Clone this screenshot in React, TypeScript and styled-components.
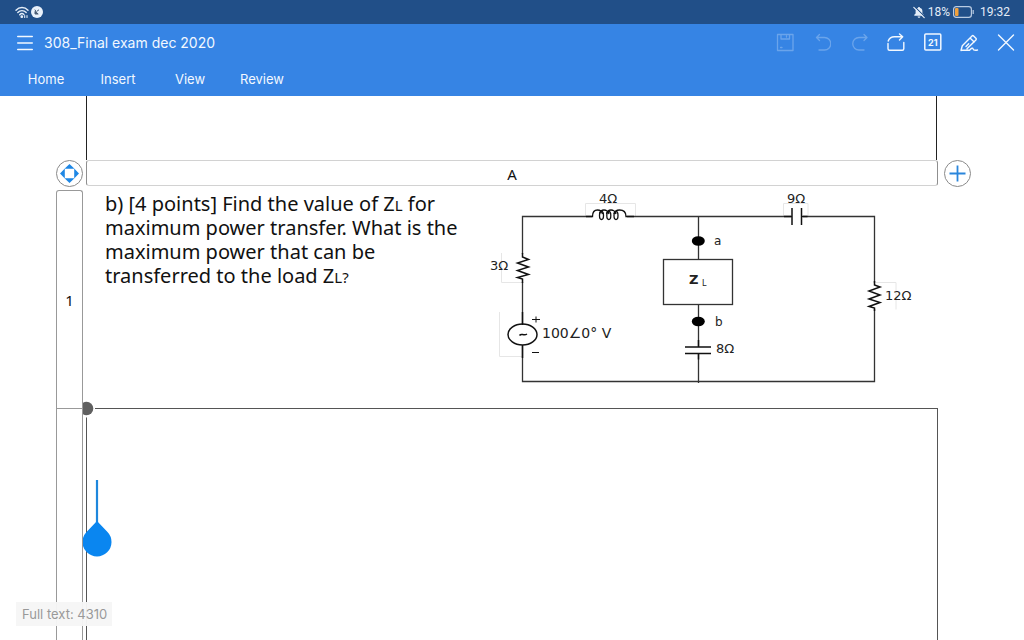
import React from "react";
import styled, { createGlobalStyle } from "styled-components";

const GlobalStyle = createGlobalStyle`
  *, *::before, *::after { box-sizing: border-box; }
  body {
    margin: 0;
    background: #ffffff;
    color: #111111;
    font-family: "Noto Sans", "Open Sans", sans-serif;
  }
  button { font: inherit; color: inherit; background: none; border: 0; padding: 0; cursor: pointer; }
  svg { display: block; }
`;

const Page = styled.div`
  display: flex;
  flex-direction: column;
  height: 100vh;
  overflow: hidden;
  position: relative;
`;

const StatusBar = styled.div`
  flex: none;
  height: 24px;
  padding: 0 14px 0 15px;
  display: flex;
  align-items: center;
  justify-content: space-between;
  background: #214f88;
  color: #e4edf8;
  font-family: Roboto, sans-serif;
  font-size: 12px;
`;

const StatusGroup = styled.div<{ $gap: number }>`
  display: flex;
  align-items: center;
  gap: ${(p) => p.$gap}px;
`;

const Clock = styled.span`
  margin-left: 3px;
`;

const Header = styled.header`
  flex: none;
  background: #3684e4;
  color: #f2f8ff;
  font-family: Inter, sans-serif;
`;

const TitleRow = styled.div`
  height: 38px;
  display: flex;
  align-items: center;
  padding: 0 8px 0 15px;
`;

const Title = styled.h1`
  flex: 1;
  margin: 0 0 0 9px;
  font-size: 14px;
  line-height: 20px;
  font-weight: 400;
`;

const Tools = styled.div`
  display: flex;
  gap: 17px;
`;

const IconButton = styled.button`
  width: 20px;
  height: 20px;
  display: flex;
  align-items: center;
  justify-content: center;
  &:disabled { opacity: 0.28; }
`;

const Tabs = styled.nav`
  height: 34px;
  display: flex;
  align-items: flex-start;
  padding: 7px 10px 0;
`;

const Tab = styled.button`
  width: 72px;
  font-size: 13px;
  line-height: 20px;
  text-align: center;
`;

const Document = styled.main`
  flex: 1;
  min-height: 0;
  display: grid;
  grid-template-columns: 27px minmax(0, 1fr) 27px;
  grid-template-rows: 64px 26px 222px 1fr;
  padding: 0 53px 0 56px;
`;

const PreviousTable = styled.div`
  grid-column: 2;
  margin: 0 7px 0 3px;
  border: solid #222222;
  border-width: 0 1px;
`;

const RoundButton = styled.button`
  grid-row: 2;
  width: 27px;
  height: 27px;
  border: 1px solid #8a8a8a;
  border-radius: 50%;
  display: flex;
  align-items: center;
  justify-content: center;
`;

const ColumnRuler = styled.div`
  grid-row: 2;
  grid-column: 2;
  margin: 0 6px 0 3px;
  border: 1px solid #8f8f8f;
  border-top-color: #d2d2d2;
  border-bottom-color: #d2d2d2;
  border-radius: 3px;
  text-align: center;
  font-size: 15px;
  line-height: 26px;
`;

const RowRuler = styled.div<{ $first?: boolean }>`
  grid-column: 1;
  margin-top: ${(p) => (p.$first ? 4 : 0)}px;
  border: 1px solid #999999;
  border-bottom: 0;
  border-radius: ${(p) => (p.$first ? "3px 3px 0 0" : "0")};
  display: flex;
  align-items: center;
  justify-content: center;
  font-size: 15px;
  line-height: 20px;
`;

const QuestionCell = styled.section`
  grid-column: 2;
  margin: 0 6px 0 3px;
  padding: 4px 12px 0 19px;
  display: flex;
  justify-content: space-between;
  align-items: flex-start;
`;

const Question = styled.p`
  margin: 0;
  padding-top: 2px;
  max-width: 364px;
  font-size: 20px;
  line-height: 24px;
  color: #111111;
`;

const Small = styled.span`
  font-size: 15px;
  line-height: 20px;
`;

const Circuit = styled.svg`
  flex: none;
  width: 440px;
  height: 200px;
  font-family: "DejaVu Sans", sans-serif;
  font-size: 12px;
`;

const AnswerCell = styled.section`
  grid-column: 2;
  margin: 0 6px 0 3px;
  border: 1px solid #555555;
  border-bottom: 0;
  position: relative;
`;

const CornerHandle = styled.svg`
  position: absolute;
  left: -4px;
  top: -10px;
`;

const Caret = styled.svg`
  position: absolute;
  left: -4px;
  top: 71px;
`;

const CountBadge = styled.div`
  position: absolute;
  left: 16px;
  bottom: 14px;
  padding: 0 5px 0 6px;
  background: rgba(246, 246, 246, 0.96);
  color: #999999;
  font-family: Inter, sans-serif;
  font-size: 13px;
  line-height: 24px;
`;

const stroke = {
  fill: "none",
  stroke: "currentColor",
  strokeLinecap: "round" as const,
  strokeLinejoin: "round" as const,
};

const WifiIcon = () => (
  <svg width="14" height="13" viewBox="0 0 14 13" {...stroke} strokeWidth="1.4">
    <path d="M1 4.200C4.300 .6 9.700 .6 13 4.200M2.800 6.500c2.300-2.500 6.100-2.500 8.400 0M4.700 8.700c1.300-1.300 3-1.300 4.200-.2" />
    <circle cx="6.800" cy="10.700" r=".7" fill="currentColor" />
    <path d="M9.700 9.600v1.800M12 9.600v1.800" strokeWidth="1.100" />
  </svg>
);

const BadgeIcon = () => (
  <svg width="12" height="12" viewBox="0 0 12 12">
    <circle cx="6" cy="6" r="6" fill="#e9f1fb" />
    <path d="M3.800 3.600l1 1.500M4 8h3.200L4 5.300zM5.500 5.500L8 3.800" stroke="#4a5c74" fill="#4a5c74" strokeWidth="1" />
  </svg>
);

const MutedBellIcon = () => (
  <svg width="12" height="13" viewBox="0 0 12 13">
    <path d="M1.300 9.700V8.800l1.300-1.200V5C2.600 3.200 3.700 2 5.200 1.700V.9h1.600v.8C8.300 2 9.400 3.200 9.400 5v2.600l1.300 1.200v.9zM4.600 10.500h2.800c0 1.800-2.800 1.800-2.800 0z" fill="currentColor" />
    <path d="M1.800 .8l10 10" stroke="#214f88" strokeWidth="1.200" />
    <path d="M.8 1.300l10.400 10.400" stroke="currentColor" strokeWidth="1.200" strokeLinecap="round" />
  </svg>
);

const BatteryIcon = () => (
  <svg width="21" height="12" viewBox="0 0 21 12">
    <rect x=".6" y=".6" width="17.800" height="10.800" rx="2.600" fill="none" stroke="#b9cbe2" strokeWidth="1.200" />
    <rect x="2" y="2" width="3.500" height="8" rx="1" fill="#f2a13c" />
    <path d="M20.200 4v4" stroke="#b9cbe2" strokeWidth="1.200" />
  </svg>
);

const MenuIcon = () => (
  <svg width="16" height="16" viewBox="0 0 16 16" {...stroke} strokeWidth="1.400">
    <path d="M.7 1.500h14.600M.7 8h14.600M.7 14.500h14.600" />
  </svg>
);

const SaveIcon = () => (
  <svg width="20" height="20" viewBox="0 0 20 20" {...stroke} strokeWidth="1.300">
    <path d="M3.500 1.500h15.500v16H3.500zM7 1.500v4.500h8.500V1.500M12.500 3v1M6.500 14.500h1.500" />
  </svg>
);

const UndoIcon = () => (
  <svg width="20" height="20" viewBox="0 0 20 20" {...stroke} strokeWidth="1.300">
    <path d="M8.500 1.500L5.500 4.500l3 3M5.700 4.500h7.800a5.900 5.900 0 0 1 0 12.500H8" />
  </svg>
);

const RedoIcon = () => (
  <svg width="20" height="20" viewBox="0 0 20 20" {...stroke} strokeWidth="1.300">
    <path d="M16 1.500l3 3-3 3M18.800 4.500H11a5.900 5.900 0 0 0 0 12.500h5" />
  </svg>
);

const ShareIcon = () => (
  <svg width="20" height="20" viewBox="0 0 20 20" {...stroke} strokeWidth="1.400">
    <path d="M3 10.500v5.200c0 .9.600 1.500 1.500 1.500h12.800c.9 0 1.500-.6 1.500-1.500V9.500M3.200 8C4.200 5 6.500 3.700 9.500 3.700h7.800M14.500 1l3.200 2.700L14.500 7" />
  </svg>
);

const PagesIcon = () => (
  <svg width="20" height="20" viewBox="0 0 20 20">
    <rect x="2.800" y="1" width="16" height="16" rx="1" {...stroke} strokeWidth="1.500" />
    <text x="10.800" y="12.500" textAnchor="middle" fontFamily="Inter, sans-serif" fontSize="9" fontWeight="700" fill="currentColor">21</text>
  </svg>
);

const EditIcon = () => (
  <svg width="19" height="18" viewBox="0 0 19 18" {...stroke} strokeWidth="1.400">
    <path d="M1 16.500l1.300-4.800L12 2c.5-.5 1.100-.5 1.600 0l2.300 2.300c.5.500.5 1.100 0 1.600L7 14.800M10 4l4.200 4M1 16.300h8.500c2-2.300 3.200-2.700 3.500-1.500.3 1.300 1.500 1.700 4.500 1.200M6 12.500l2.700-2.700" />
  </svg>
);

const CloseIcon = () => (
  <svg width="18" height="18" viewBox="0 0 18 18" {...stroke} strokeWidth="1.400">
    <path d="M1.500 1l15 15M16.500 1l-15 15" />
  </svg>
);

const MoveIcon = () => (
  <svg width="19" height="19" viewBox="0 0 19 19" fill="#1e87e5">
    <path d="M9.500 0L14.500 4.800H4.500zM9.500 19L4.500 14.200h10zM0 9.500L4.800 4.500v10zM19 9.500L14.200 14.500V4.500z" />
  </svg>
);

const PlusIcon = () => (
  <svg width="17" height="17" viewBox="0 0 17 17" stroke="#2a86dc" strokeWidth="1.800">
    <path d="M8.500 .5v16M.5 8.500h16" />
  </svg>
);

const CircuitDiagram = () => (
  <Circuit viewBox="486 190 440 200" role="img" aria-label="Circuit diagram" fill="#222222">
    <g fill="none" stroke="#e6e6e6" strokeWidth="1">
      <path d="M585.500 216v-12.500h50V216M501.500 253v29.500H522M499.500 312v44.500H522M783.500 216v-12.500h24.500V216M876 282.500h20v27" />
    </g>
    <g fill="none" stroke="#333333" strokeWidth="1.300">
      <path d="M522.500 254V216.500H592M627 216.500h164M803 216.500h71.500V283M874.500 309v72.500h-352V346M522.500 282v43M698.500 216v43M698.500 304v42M698.500 354v29" />
      <rect x="663.500" y="259.500" width="69" height="45" />
    </g>
    <g fill="none" stroke="#111111" strokeWidth="1.300">
      <path d="M586 216.500h6.500c0-4 2-6.500 5-6.500 2.500 0 4.500 1.500 5 4M599.500 214c.5-2.500 2.500-4 4.500-4s4.500 1.500 5 4M606.500 214c.5-2.500 2.500-4 4.500-4s4.500 1.500 5 4M614 214c.5-2.500 3-4 5.500-4 4 0 6.500 2.500 6.500 6.500h8" />
      <ellipse cx="601.500" cy="215.500" rx="2" ry="4" />
      <ellipse cx="608.800" cy="215.500" rx="2" ry="4" />
      <ellipse cx="616" cy="215.500" rx="2" ry="4" />
    </g>
    <g fill="none" stroke="#111111" strokeWidth="1.500">
      <path d="M522.500 253v4l6 2.500-11 3.500 11 4-11 3.500 11 4-11 3 5 1.500v4" />
      <path d="M874.500 281v4l5.500 2-11 4 11 4-11 4 11 3.500-11 4 5.500 1.500v3" />
      <path d="M792 208v17M801.500 208v17M784 216.500h8M801.500 216.500h6" />
      <path d="M685 347h26M685 353.500h26M698.500 340v7M698.500 353.500v6" />
      <path d="M522.500 312v13M522.500 345v13" />
      <ellipse cx="522.500" cy="334.500" rx="14.500" ry="10.500" />
      <path d="M519.500 335.500c2-3 4 1 7.500-1.500" />
      <path d="M532 319.500h8M536 316.500v6M532 352.500h7" strokeWidth="1" />
    </g>
    <ellipse cx="698.300" cy="241" rx="6.500" ry="4.800" fill="#000000" />
    <ellipse cx="698.300" cy="321.500" rx="6.500" ry="4.800" fill="#000000" />
    <text x="599" y="203" fontSize="13">4Ω</text>
    <text x="787" y="203" fontSize="13">9Ω</text>
    <text x="490" y="270" fontSize="13">3Ω</text>
    <text x="885" y="300" fontSize="13">12Ω</text>
    <text x="716" y="353" fontSize="13">8Ω</text>
    <text x="542" y="338" fontSize="14">100∠0° V</text>
    <text x="714" y="245">a</text>
    <text x="715" y="326">b</text>
    <text x="689" y="284" fontSize="13" fontWeight="700">Z</text>
    <text x="702" y="286" fontSize="8">L</text>
  </Circuit>
);

const tabs = ["Home", "Insert", "View", "Review"];

export default function App() {
  return (
    <>
      <GlobalStyle />
      <Page>
        <StatusBar>
          <StatusGroup $gap={2}>
            <WifiIcon />
            <BadgeIcon />
          </StatusGroup>
          <StatusGroup $gap={3}>
            <MutedBellIcon />
            <span>18%</span>
            <BatteryIcon />
            <Clock>19:32</Clock>
          </StatusGroup>
        </StatusBar>

        <Header>
          <TitleRow>
            <IconButton aria-label="Menu"><MenuIcon /></IconButton>
            <Title>308_Final exam dec 2020</Title>
            <Tools>
              <IconButton aria-label="Save" disabled><SaveIcon /></IconButton>
              <IconButton aria-label="Undo" disabled><UndoIcon /></IconButton>
              <IconButton aria-label="Redo" disabled><RedoIcon /></IconButton>
              <IconButton aria-label="Share"><ShareIcon /></IconButton>
              <IconButton aria-label="Pages"><PagesIcon /></IconButton>
              <IconButton aria-label="Edit"><EditIcon /></IconButton>
              <IconButton aria-label="Close"><CloseIcon /></IconButton>
            </Tools>
          </TitleRow>
          <Tabs>
            {tabs.map((t) => (
              <Tab key={t}>{t}</Tab>
            ))}
          </Tabs>
        </Header>

        <Document>
          <PreviousTable />
          <RoundButton aria-label="Move table"><MoveIcon /></RoundButton>
          <ColumnRuler>A</ColumnRuler>
          <RoundButton aria-label="Add column"><PlusIcon /></RoundButton>
          <RowRuler $first>1</RowRuler>
          <QuestionCell>
            <Question>
              b) [4 points] Find the value of Z<Small>L</Small> for maximum power transfer. What is the
              maximum power that can be transferred to the load Z<Small>L?</Small>
            </Question>
            <CircuitDiagram />
          </QuestionCell>
          <RowRuler />
          <AnswerCell>
            <CornerHandle width="12" height="19" viewBox="0 0 12 19">
              <circle cx="3.500" cy="9.500" r="9" fill="#ffffff" />
              <circle cx="3.500" cy="9.500" r="6.800" fill="#606060" />
            </CornerHandle>
            <Caret width="30" height="78" viewBox="0 0 30 78">
              <path d="M14 0v46" stroke="#1e87dd" strokeWidth="2.200" />
              <path d="M14 41L24.500 52A14.500 14.500 0 1 1 3.500 52z" fill="#0a86f0" />
            </Caret>
          </AnswerCell>
        </Document>

        <CountBadge>Full text: 4310</CountBadge>
      </Page>
    </>
  );
}
